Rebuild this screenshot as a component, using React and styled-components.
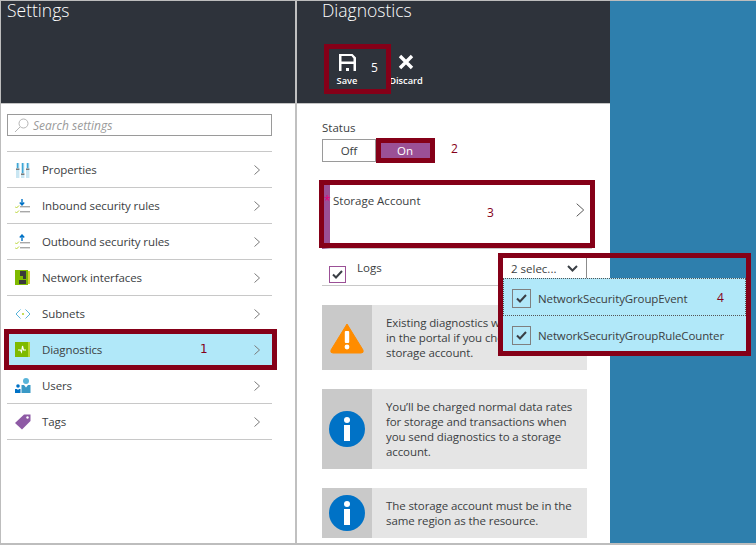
import React from "react";
import styled, { createGlobalStyle } from "styled-components";

const Global = createGlobalStyle`
  html, body { margin: 0; padding: 0; background: #fff; }
  #root { width: 756px; height: 545px; }
  * { box-sizing: border-box; }
`;

const Page = styled.div`
  position: relative;
  width: 756px;
  height: 545px;
  display: flex;
  overflow: hidden;
  background: #fff;
  border-top: 1px solid #bdbdbd;
  border-left: 1px solid #bdbdbd;
  border-bottom: 2px solid #bdbdbd;
  font-family: "Open Sans", "Noto Sans", sans-serif;
  font-size: 11.5px;
  color: #3b3e42;
`;

const Blade = styled.section`
  display: flex;
  flex-direction: column;
  flex: none;
  width: ${(p) => p.$width}px;
  height: 100%;
  border-right: ${(p) => (p.$divider ? "2px solid #c0c0c0" : "none")};
`;

const Header = styled.header`
  height: 102px;
  flex: none;
  background: #2e333b;
  padding-left: ${(p) => p.$pad}px;
  color: #fff;
`;

const HeaderRule = styled.div`
  height: 1px;
  flex: none;
  background: #c4c4c4;
`;

const Title = styled.h1`
  margin: 0;
  font-size: 17.5px;
  font-weight: 300;
  line-height: 19px;
`;

const Commands = styled.div`
  display: flex;
  margin-top: 34px;
  margin-left: 10px;
  gap: 28px;
`;

const Command = styled.div`
  display: flex;
  flex-direction: column;
  align-items: center;
  width: ${(p) => p.$width}px;
  font-size: 9.3px;
  font-weight: 600;
  line-height: 12px;
  color: #fff;
  gap: ${(p) => p.$gap}px;
  svg { display: block; }
`;

const SaveNumber = styled.span`
  position: absolute;
  left: 370px;
  top: 58px;
  color: #fff;
  font-size: 12px;
`;

const LeftBody = styled.div`
  padding: 10px 23px 0 6px;
`;

const SearchBox = styled.div`
  height: 22px;
  display: flex;
  align-items: center;
  gap: 4px;
  padding: 1px 0 0 6px;
  border: 1px solid #9a9a9a;
  color: #9a9a9a;
  font-style: italic;
  font-size: 12px;
  margin-bottom: 15px;
  svg { margin-top: -1px; }
`;

const MenuList = styled.ul`
  list-style: none;
  margin: 0;
  padding: 0;
  border-top: 1px solid #c8c8c8;
`;

const MenuRow = styled.li`
  height: 36px;
  display: flex;
  align-items: center;
  padding: 0 12px 0 8px;
  border-bottom: 1px solid #c8c8c8;
  background: ${(p) => (p.$active ? "#b1e8f9" : "transparent")};
`;

const MenuIcon = styled.span`
  width: 16px;
  height: 16px;
  flex: none;
  margin-right: 11px;
  svg { display: block; }
`;

const MenuLabel = styled.span`
  flex: 1;
  letter-spacing: -0.1px;
`;

const Note = styled.span`
  color: #850018;
  font-size: 12px;
`;

const DiagNote = styled(Note)`
  position: absolute;
  left: 199px;
  top: 341px;
  font-family: "DejaVu Sans", sans-serif;
`;

const RightBody = styled.div`
  padding: 16px 23px 0 25px;
  display: flex;
  flex-direction: column;
`;

const StatusLabel = styled.div`
  line-height: 16px;
  height: 19px;
`;

const Toggle = styled.div`
  display: flex;
  height: 23px;
  width: 112px;
`;

const ToggleOption = styled.div`
  flex: ${(p) => (p.$on ? "0 0 58px" : "0 0 54px")};
  display: flex;
  align-items: center;
  justify-content: center;
  border: ${(p) => (p.$on ? "1px solid #9b5096" : "1px solid #9a9a9a")};
  background: ${(p) => (p.$on ? "#9b5096" : "#fff")};
  color: ${(p) => (p.$on ? "#fff" : "#3b3e42")};
`;

const StorageRow = styled.div`
  margin-top: 23px;
  height: 64px;
  display: flex;
  padding: 8px 8px 0 3px;
  border-left: 8px solid #9b5096;
  border-bottom: 1px solid #c8c8c8;
  position: relative;
  margin-right: -5px;
`;

const StorageLabel = styled.span`
  flex: 1;
  line-height: 16px;
`;

const Required = styled.span`
  position: absolute;
  left: -6px;
  top: 11px;
  color: #e6007e;
  font-size: 12px;
  line-height: 10px;
`;

const StorageChevron = styled.span`
  margin-top: 10px;
  svg { display: block; }
`;

const StorageNote = styled(Note)`
  position: absolute;
  left: 157px;
  top: 19px;
`;

const LogsRow = styled.div`
  height: 37px;
  display: flex;
  align-items: flex-start;
  border-bottom: 1px solid #c8c8c8;
  padding: 17px 0 0 7px;
`;

const Box = styled.span`
  width: ${(p) => (p.$purple ? 17 : 19)}px;
  height: ${(p) => (p.$purple ? 17 : 19)}px;
  flex: none;
  display: flex;
  align-items: center;
  justify-content: center;
  border: 1px solid ${(p) => (p.$purple ? "#9b5096" : "#7f7f7f")};
  background: ${(p) => (p.$purple ? "#fff" : "transparent")};
  svg { display: block; }
`;

const LogsLabel = styled.span`
  margin-left: 11px;
  line-height: 16px;
  margin-top: -6px;
`;

const Alerts = styled.div`
  display: flex;
  flex-direction: column;
  gap: 19px;
  margin-top: 19px;
`;

const Alert = styled.div`
  display: flex;
  background: #e5e5e5;
  height: ${(p) => p.$height}px;
`;

const AlertIcon = styled.div`
  flex: 0 0 50px;
  background: #c9c9c9;
  display: flex;
  align-items: center;
  justify-content: center;
  svg { display: block; }
`;

const AlertText = styled.p`
  margin: 0;
  padding-left: 14px;
  align-self: center;
  line-height: 15px;
  letter-spacing: -0.1px;
  width: 210px;
  white-space: nowrap;
`;

const Sky = styled.div`
  flex: 1;
  background: #2e7fad;
`;

const SelectButton = styled.div`
  position: absolute;
  left: 502px;
  top: 257px;
  width: 84px;
  height: 21px;
  background: #fff;
  border-right: 1px solid #8c8c8c;
  display: flex;
  align-items: center;
  justify-content: space-between;
  padding: 0 8px;
  svg { display: block; }
`;

const Popup = styled.div`
  position: absolute;
  left: 502px;
  top: 277px;
  width: 243px;
  height: 73px;
  overflow: hidden;
  background: #b1e8f9;
  display: flex;
  flex-direction: column;
`;

const PopupItem = styled.div`
  flex: 0 0 38px;
  display: flex;
  align-items: center;
  padding: ${(p) => (p.$focus ? 2 : 0)}px 0 0 9px;
  gap: 7px;
  letter-spacing: -0.12px;
  white-space: nowrap;
  outline: ${(p) => (p.$focus ? "1px dotted #555" : "none")};
  outline-offset: -1px;
  position: relative;
`;

const PopupNote = styled(Note)`
  position: absolute;
  left: 214px;
  top: 11px;
`;

const Frame = styled.div`
  position: absolute;
  left: ${(p) => p.$x - 1}px;
  top: ${(p) => p.$y - 1}px;
  width: ${(p) => p.$w}px;
  height: ${(p) => p.$h}px;
  border: 5px solid #850018;
  pointer-events: none;
`;

const ToggleNote = styled(Note)`
  position: absolute;
  left: 450px;
  top: 139px;
`;

const Chevron = ({ size = 10, color = "#7a7a7a" }) => (
  <svg width={size * 0.6} height={size} viewBox="0 0 6 10">
    <path d="M.5 .5 L5.5 5 L.5 9.5" fill="none" stroke={color} strokeWidth={size > 10 ? 0.7 : 1} />
  </svg>
);

const PropertiesIcon = () => (
  <svg width="16" height="16" viewBox="0 0 16 16">
    <rect x="1" y="1" width="3.4" height="15" fill="#c9e6f2" />
    <rect x="6" y="1" width="3.4" height="15" fill="#c9e6f2" />
    <rect x="11" y="1" width="3.4" height="15" fill="#c9e6f2" />
    <rect x="2" y="1" width="1.4" height="5" fill="#3ea6d6" />
    <rect x="7" y="1" width="1.4" height="10" fill="#3ea6d6" />
    <rect x="12" y="1" width="1.4" height="5" fill="#3ea6d6" />
    <rect x="1" y="6.5" width="3.4" height="1.5" fill="#7a7a7a" />
    <rect x="6" y="11.5" width="3.4" height="1.5" fill="#7a7a7a" />
    <rect x="11" y="6.5" width="3.4" height="1.5" fill="#7a7a7a" />
  </svg>
);

const RulesIcon = ({ up }) => (
  <svg width="16" height="16" viewBox="0 0 16 16">
    <rect x="5" y="8" width="10" height="1.4" fill="#a8a8a8" />
    <rect x="5" y="13" width="10" height="1.4" fill="#a8a8a8" />
    <path d="M0 8.5 l1.5 1.5 l2.5 -2.5 M0 13.5 l1.5 1.5 l2.5 -2.5" fill="none" stroke="#b8d432" strokeWidth="1" />
    {up ? (
      <path d="M7 7 V1.5 M4.8 3.5 L7 1 L9.2 3.5" fill="none" stroke="#0072c6" strokeWidth="1.4" />
    ) : (
      <path d="M7 1 V6.5 M4.8 4.5 L7 7 L9.2 4.5" fill="none" stroke="#0072c6" strokeWidth="1.4" />
    )}
  </svg>
);

const NicIcon = () => (
  <svg width="16" height="16" viewBox="0 0 16 16">
    <rect x="0" y="0" width="13" height="15" fill="#7fba00" />
    <rect x="13" y="1" width="2" height="13" fill="#d8d23b" />
    <rect x="5" y="1" width="6" height="5" fill="#3a3a3a" />
    <rect x="8" y="6" width="3" height="3" fill="#3a3a3a" />
    <rect x="4" y="10" width="7" height="4" fill="#3a3a3a" />
  </svg>
);

const SubnetIcon = () => (
  <svg width="16" height="16" viewBox="0 0 16 16">
    <path d="M5.5 3.5 L1 8 L5.5 12.5" fill="none" stroke="#59b4d9" strokeWidth="1" />
    <path d="M10.5 3.5 L15 8 L10.5 12.5" fill="none" stroke="#59b4d9" strokeWidth="1" />
    <circle cx="8" cy="8" r="1.1" fill="#b8d432" />
  </svg>
);

const DiagnosticsIcon = () => (
  <svg width="16" height="16" viewBox="0 0 16 16">
    <rect x="13" y="0" width="2" height="15" fill="#b8d432" />
    <rect x="0" y="0" width="13" height="15" fill="#7fba00" />
    <path d="M3 8 H5.5 L6.5 10 L7.5 4 L8.5 8 H11" fill="none" stroke="#fff" strokeWidth="1.1" />
  </svg>
);

const UsersIcon = () => (
  <svg width="16" height="16" viewBox="0 0 16 16">
    <circle cx="11" cy="3" r="3" fill="#59b4d9" />
    <path d="M6.5 7 H9 L11 9.5 L13 7 H15.5 V15 H6.5 Z" fill="#3999c6" />
    <circle cx="3" cy="8" r="1.8" fill="#0072c6" />
    <path d="M0 11 H2 L3 12 L4 11 H5.5 V15 H0 Z" fill="#0072c6" />
  </svg>
);

const TagIcon = () => (
  <svg width="16" height="16" viewBox="0 0 16 16">
    <path d="M0 9 L9 0.5 H15.5 V7 L7 15.5 Z" fill="#8e5aa5" />
    <circle cx="12.5" cy="3.5" r="1.2" fill="#fff" />
  </svg>
);

const Check = ({ color = "#3a3f45" }) => (
  <svg width="11" height="9" viewBox="0 0 11 9">
    <path d="M1 4.5 L4 7.5 L10 1" fill="none" stroke={color} strokeWidth="2" />
  </svg>
);

const WarningIcon = () => (
  <svg width="36" height="32" viewBox="0 0 36 32">
    <path d="M18 2 L34 28 Q35 31 32 31 H4 Q1 31 2 28 Z" fill="#ff8c00" stroke="#ff8c00" strokeWidth="1" strokeLinejoin="round" />
    <rect x="15.8" y="9" width="4.4" height="12" rx="1" fill="#fff" />
    <circle cx="18" cy="25" r="2.4" fill="#fff" />
  </svg>
);

const InfoIcon = () => (
  <svg width="36" height="36" viewBox="0 0 36 36">
    <circle cx="18" cy="18" r="18" fill="#0072c6" />
    <circle cx="18" cy="9" r="3" fill="#fff" />
    <rect x="15" y="14" width="6" height="16" fill="#fff" />
  </svg>
);

const rows = [
  ["Properties", <PropertiesIcon />],
  ["Inbound security rules", <RulesIcon />],
  ["Outbound security rules", <RulesIcon up />],
  ["Network interfaces", <NicIcon />],
  ["Subnets", <SubnetIcon />],
  ["Diagnostics", <DiagnosticsIcon />, true],
  ["Users", <UsersIcon />],
  ["Tags", <TagIcon />],
];

export default function App() {
  return (
    <>
      <Global />
      <Page>
        <Blade $width={296} $divider>
          <Header $pad={6}>
            <Title>Settings</Title>
          </Header>
          <HeaderRule />
          <LeftBody>
            <SearchBox>
              <svg width="15" height="15" viewBox="0 0 15 15">
                <circle cx="9.5" cy="5.5" r="4.5" fill="none" stroke="#b5b5b5" />
                <path d="M6 9 L1 14" stroke="#b5b5b5" />
              </svg>
              <span>Search settings</span>
            </SearchBox>
            <MenuList>
              {rows.map(([label, icon, active]) => (
                <MenuRow key={label} $active={active}>
                  <MenuIcon>{icon}</MenuIcon>
                  <MenuLabel>{label}</MenuLabel>
                  <Chevron />
                </MenuRow>
              ))}
            </MenuList>
          </LeftBody>
        </Blade>
        <Blade $width={313}>
          <Header $pad={25}>
            <Title>Diagnostics</Title>
            <Commands>
              <Command $width={30} $gap={4}>
                <svg width="17" height="17" viewBox="0 0 17 17">
                  <path d="M0 17 V0 H13.5 L17 3.5 V17 H14.5 V10 H2.5 V17 Z M2.5 2 V7.5 H14.5 V4.5 L12.5 2 Z" fill="#fff" fillRule="evenodd" />
                  <rect x="7" y="14" width="3" height="3" fill="#fff" />
                </svg>
                <span>Save</span>
              </Command>
              <Command $width={32} $gap={5}>
                <svg width="16" height="16" viewBox="0 0 16 16">
                  <path d="M2 2 L14 14 M14 2 L2 14" fill="none" stroke="#fff" strokeWidth="3.4" />
                </svg>
                <span>Discard</span>
              </Command>
            </Commands>
          </Header>
          <HeaderRule />
          <RightBody>
            <StatusLabel>Status</StatusLabel>
            <Toggle>
              <ToggleOption>Off</ToggleOption>
              <ToggleOption $on>On</ToggleOption>
            </Toggle>
            <StorageRow>
              <Required>*</Required>
              <StorageLabel>Storage Account</StorageLabel>
              <StorageNote>3</StorageNote>
              <StorageChevron>
                <Chevron size={14} color="#555" />
              </StorageChevron>
            </StorageRow>
            <LogsRow>
              <Box $purple>
                <Check />
              </Box>
              <LogsLabel>Logs</LogsLabel>
            </LogsRow>
            <Alerts>
              <Alert $height={65}>
                <AlertIcon>
                  <WarningIcon />
                </AlertIcon>
                <AlertText>
                  Existing diagnostics will be overwritten
                  <br />
                  in the portal if you choose a different
                  <br />
                  storage account.
                </AlertText>
              </Alert>
              <Alert $height={80}>
                <AlertIcon>
                  <InfoIcon />
                </AlertIcon>
                <AlertText>
                  You’ll be charged normal data rates
                  <br />
                  for storage and transactions when
                  <br />
                  you send diagnostics to a storage
                  <br />
                  account.
                </AlertText>
              </Alert>
              <Alert $height={50}>
                <AlertIcon>
                  <InfoIcon />
                </AlertIcon>
                <AlertText>
                  The storage account must be in the
                  <br />
                  same region as the resource.
                </AlertText>
              </Alert>
            </Alerts>
          </RightBody>
        </Blade>
        <Sky />
        <SelectButton>
          <span>2 selec...</span>
          <svg width="11" height="7" viewBox="0 0 11 7">
            <path d="M1 1 L5.5 5.5 L10 1" fill="none" stroke="#3a3f45" strokeWidth="2" />
          </svg>
        </SelectButton>
        <Popup>
          <PopupItem $focus>
            <Box>
              <Check />
            </Box>
            NetworkSecurityGroupEvent
            <PopupNote>4</PopupNote>
          </PopupItem>
          <PopupItem>
            <Box>
              <Check />
            </Box>
            NetworkSecurityGroupRuleCounter
          </PopupItem>
        </Popup>
        <SaveNumber>5</SaveNumber>
        <DiagNote>1</DiagNote>
        <ToggleNote>2</ToggleNote>
        <Frame $x={4} $y={329} $w={273} $h={41} />
        <Frame $x={324} $y={44} $w={67} $h={50} />
        <Frame $x={376} $y={138} $w={59} $h={25} />
        <Frame $x={319} $y={180} $w={276} $h={68} />
        <Frame $x={498} $y={253} $w={253} $h={103} />
      </Page>
    </>
  );
}
